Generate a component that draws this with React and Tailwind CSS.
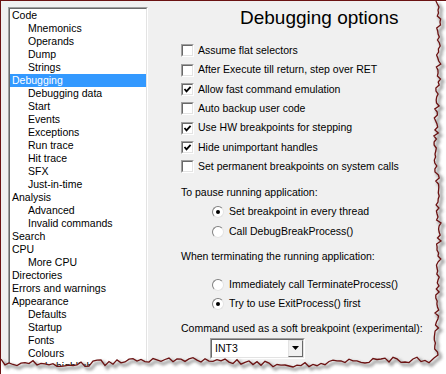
import React from 'react';

const tree = [
  ['Code', 0], ['Mnemonics', 1], ['Operands', 1], ['Dump', 1], ['Strings', 1],
  ['Debugging', 0, true], ['Debugging data', 1], ['Start', 1], ['Events', 1],
  ['Exceptions', 1], ['Run trace', 1], ['Hit trace', 1], ['SFX', 1], ['Just-in-time', 1],
  ['Analysis', 0], ['Advanced', 1], ['Invalid commands', 1], ['Search', 0], ['CPU', 0],
  ['More CPU', 1], ['Directories', 0], ['Errors and warnings', 0], ['Appearance', 0],
  ['Defaults', 1], ['Startup', 1], ['Fonts', 1], ['Colours', 1], ['Code highlighting', 1],
];

const checks = [
  ['Assume flat selectors', false],
  ['After Execute till return, step over RET', false],
  ['Allow fast command emulation', true],
  ['Auto backup user code', false],
  ['Use HW breakpoints for stepping', true],
  ['Hide unimportant handles', true],
  ['Set permanent breakpoints on system calls', false],
];

function CheckBox({ checked }) {
  return (
    <div className="w-[13px] h-[13px] shrink-0 border border-t-[#a0a0a0] border-l-[#a0a0a0] border-r-white border-b-white">
      <div className="w-full h-full border border-t-[#696969] border-l-[#696969] border-r-[#e3e3e3] border-b-[#e3e3e3] bg-white">
        {checked && (
          <svg width="9" height="9" viewBox="0 0 9 9">
            <path d="M1.5 4 L3.5 6.3 L7.6 1.8" fill="none" stroke="#000" strokeWidth="1.8" />
          </svg>
        )}
      </div>
    </div>
  );
}

function Radio({ checked }) {
  return (
    <div className="w-[12px] h-[12px] shrink-0 rounded-full border border-t-[#808080] border-l-[#808080] border-r-[#e3e3e3] border-b-[#e3e3e3] bg-white flex items-center justify-center">
      {checked && <div className="w-[4px] h-[4px] rounded-full bg-black" />}
    </div>
  );
}

function rnd(i, seed) {
  const v = Math.sin(i * 12.9898 + seed * 78.233) * 43758.5453;
  return v - Math.floor(v);
}

function TornEdge() {
  const pts = [];
  for (let y = 0; y <= 354; y += 3) {
    pts.push([436.5 + (rnd(y, 1) - 0.5) * 5 + Math.sin(y / 30) * 1.2, y]);
  }
  pts.push([433, 357]);
  for (let x = 428; x >= 0; x -= 4) {
    pts.push([x, 361 + (rnd(x, 2) - 0.5) * 6 + Math.sin(x / 37) * 2]);
  }
  const line = pts.map((p, i) => (i ? 'L' : 'M') + p[0].toFixed(1) + ' ' + p[1].toFixed(1)).join(' ');
  const shape = line + ' L0 ' + pts[pts.length - 1][1].toFixed(1) + ' L0 0 Z';
  return (
    <svg className="absolute inset-0" width="446" height="374" viewBox="0 0 446 374">
      <defs>
        <filter id="sh" x="-10%" y="-10%" width="120%" height="120%">
          <feGaussianBlur stdDeviation="1.4" />
        </filter>
      </defs>
      <path d={'M0 0 H446 V374 H0 Z ' + shape} fill="#fff" fillRule="evenodd" />
      <path d={line} transform="translate(2.5 2.5)" fill="none" stroke="#8a8a8a" strokeWidth="3" filter="url(#sh)" opacity="0.8" />
      <path d={line} fill="none" stroke="#6b1212" strokeWidth="1.3" />
    </svg>
  );
}

export default function App() {
  const font = { fontFamily: '"Liberation Sans", Arial, sans-serif' };
  return (
    <div className="relative w-[446px] h-[374px] overflow-hidden bg-[#f0f0f0] border-t border-l border-[#6b1212] text-black text-[10.5px]" style={font}>
      <div className="flex">
        <div className="ml-[7px] mt-[6px] w-[140px] h-[400px] shrink-0 border border-t-[#a0a0a0] border-l-[#a0a0a0] border-r-white border-b-white">
          <div className="w-full h-full border border-t-[#696969] border-l-[#696969] border-r-[#e3e3e3] border-b-[#e3e3e3] bg-white">
            {tree.map(([label, lvl, sel]) => (
              <div
                key={label}
                className={`h-[13px] leading-[13px] whitespace-nowrap ${lvl ? 'pl-[18px]' : 'pl-[2px]'} ${sel ? 'bg-[#3399ff] text-white' : ''}`}
              >
                {label}
              </div>
            ))}
          </div>
        </div>

        <div className="flex-1 flex flex-col">
          <div className="mt-[6px] ml-[92px] h-[22px] leading-[22px] text-[19px] whitespace-nowrap">Debugging options</div>

          <div className="mt-[12.33px] pl-[33px] flex flex-col">
            {checks.map(([label, on]) => (
              <div key={label} className="h-[19.33px] flex items-center gap-[4px] whitespace-nowrap">
                <CheckBox checked={on} />
                <span>{label}</span>
              </div>
            ))}
          </div>

          <div className="mt-[7px] pl-[33px] h-[19px] flex items-center">To pause running application:</div>
          <div className="pl-[64px] flex flex-col">
            <div className="h-[19.33px] flex items-center gap-[5px]"><Radio checked /><span>Set breakpoint in every thread</span></div>
            <div className="h-[19.33px] flex items-center gap-[5px]"><Radio /><span>Call DebugBreakProcess()</span></div>
          </div>

          <div className="mt-[6px] pl-[33px] h-[19px] flex items-center">When terminating the running application:</div>
          <div className="mt-[9px] pl-[64px] flex flex-col">
            <div className="h-[19.33px] flex items-center gap-[5px]"><Radio /><span>Immediately call TerminateProcess()</span></div>
            <div className="h-[19.33px] flex items-center gap-[5px]"><Radio checked /><span>Try to use ExitProcess() first</span></div>
          </div>

          <div className="mt-[5px] pl-[33px] h-[19px] flex items-center whitespace-nowrap">Command used as a soft breakpoint (experimental):</div>
          <div className="pl-[62px]">
            <div className="w-[95px] h-[21px] border border-t-[#a0a0a0] border-l-[#a0a0a0] border-r-white border-b-white">
              <div className="w-full h-full border border-t-[#696969] border-l-[#696969] border-r-[#e3e3e3] border-b-[#e3e3e3] bg-white flex items-center">
                <span className="flex-1 pl-[3px]">INT3</span>
                <div className="w-[15px] h-full border border-t-[#e3e3e3] border-l-[#e3e3e3] border-r-[#696969] border-b-[#696969] bg-[#f0f0f0] flex items-center justify-center">
                  <svg width="7" height="4" viewBox="0 0 7 4"><path d="M0 0 H7 L3.5 4 Z" fill="#000" /></svg>
                </div>
              </div>
            </div>
          </div>
        </div>
      </div>
      <TornEdge />
    </div>
  );
}
